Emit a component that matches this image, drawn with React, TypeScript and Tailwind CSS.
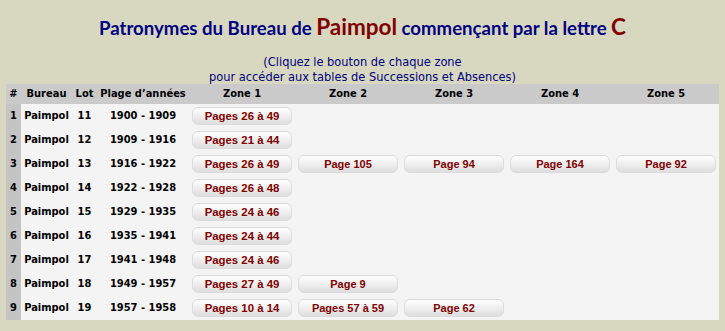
type Row = {
  n: number;
  lot: number;
  plage: string;
  zones: string[];
};

const rows: Row[] = [
  { n: 1, lot: 11, plage: "1900 - 1909", zones: ["Pages 26 à 49"] },
  { n: 2, lot: 12, plage: "1909 - 1916", zones: ["Pages 21 à 44"] },
  { n: 3, lot: 13, plage: "1916 - 1922", zones: ["Pages 26 à 49", "Page 105", "Page 94", "Page 164", "Page 92"] },
  { n: 4, lot: 14, plage: "1922 - 1928", zones: ["Pages 26 à 48"] },
  { n: 5, lot: 15, plage: "1929 - 1935", zones: ["Pages 24 à 46"] },
  { n: 6, lot: 16, plage: "1935 - 1941", zones: ["Pages 24 à 44"] },
  { n: 7, lot: 17, plage: "1941 - 1948", zones: ["Pages 24 à 46"] },
  { n: 8, lot: 18, plage: "1949 - 1957", zones: ["Pages 27 à 49", "Page 9"] },
  { n: 9, lot: 19, plage: "1957 - 1958", zones: ["Pages 10 à 14", "Pages 57 à 59", "Page 62"] },
];

const zoneHeads = ["Zone 1", "Zone 2", "Zone 3", "Zone 4", "Zone 5"];

const ZoneButton = ({ label, first }: { label: string; first: boolean }) => (
  <button
    type="button"
    className={
      "mx-auto block h-[18px] w-[100px] rounded-[6px] border border-[#dcdcdc] bg-gradient-to-b from-white to-[#dedede] font-['Liberation_Sans',Arial,sans-serif] font-bold leading-[16px] text-[#800000] " +
      (first ? "text-[11.4px]" : "text-[11px]")
    }
  >
    {label}
  </button>
);

export default function App() {
  return (
    <div className="min-h-[331px] w-[725px] bg-[#d8d8c0] pt-[12px]">
      <h1 className="h-[30px] text-center font-['Lato',sans-serif] text-[18.6px] font-bold leading-[30px] text-[#000080]">
        Patronymes du Bureau de <span className="text-[22.5px] text-[#800000]">Paimpol</span> commençant par la lettre{" "}
        <span className="text-[22.5px] text-[#800000]">C</span>
      </h1>

      <div className="mt-[12px] text-center font-['DejaVu_Sans_Condensed','DejaVu_Sans',sans-serif] text-[12.7px] leading-[15px] text-[#000080]">
        <p>(Cliquez le bouton de chaque zone</p>
        <p>pour accéder aux tables de Successions et Absences)</p>
      </div>

      <table className="ml-[6px] w-[713px] table-fixed border-collapse font-['DejaVu_Sans_Condensed','DejaVu_Sans',Verdana,sans-serif] text-[11px] font-bold text-black">
        <colgroup>
          <col className="w-[15px]" />
          <col className="w-[51px]" />
          <col className="w-[25px]" />
          <col className="w-[92px]" />
          {zoneHeads.map((z) => (
            <col key={z} className="w-[106px]" />
          ))}
        </colgroup>
        <thead>
          <tr className="h-[20px] bg-[#cacaca]">
            <th className="p-0 text-center">#</th>
            <th className="p-0 text-center">Bureau</th>
            <th className="p-0 text-center">Lot</th>
            <th className="whitespace-nowrap p-0 text-center">Plage d’années</th>
            {zoneHeads.map((z) => (
              <th key={z} className="p-0 text-center">
                {z}
              </th>
            ))}
          </tr>
        </thead>
        <tbody>
          {rows.map((row) => (
            <tr key={row.n} className="h-[24px] bg-[#f4f4f4]">
              <td className="bg-[#c4c4c4] p-0 text-center">{row.n}</td>
              <td className="p-0 text-center">Paimpol</td>
              <td className="p-0 text-center">{row.lot}</td>
              <td className="p-0 text-center">{row.plage}</td>
              {zoneHeads.map((z, i) => (
                <td key={z} className="p-0">
                  {row.zones[i] && <ZoneButton label={row.zones[i]} first={i === 0} />}
                </td>
              ))}
            </tr>
          ))}
        </tbody>
      </table>
    </div>
  );
}
